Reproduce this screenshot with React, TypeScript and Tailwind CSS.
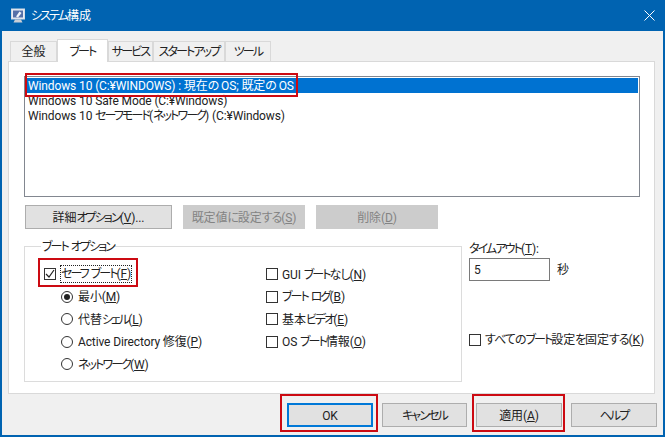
import { FC, ReactNode } from "react";

const tabs = ["全般", "ブート", "サービス", "スタートアップ", "ツール"];
const tabWidths = ["w-[47px]", "w-[51px]", "w-[45px]", "w-[72px]", "w-[46px]"];

// "&V" underlines the mnemonic; kana runs are set tighter, like the narrow UI font
const T: FC<{ s: string }> = ({ s }) => (
  <>
    {s.split(/(&.|[ァ-ヶー]+|[ぁ-ん]+)/).map((part, i) => {
      if (part.startsWith("&")) return <u key={i}>{part[1]}</u>;
      if (/^[ァ-ヶー]/.test(part)) return <span key={i} className="tracking-[-1.9px]">{part}</span>;
      if (/^[ぁ-ん]/.test(part)) return <span key={i} className="tracking-[-1px]">{part}</span>;
      return part;
    })}
  </>
);

const AppIcon = () => (
  <svg width="16" height="16" viewBox="0 0 16 16" className="shrink-0">
    <rect x="1.5" y="1" width="13" height="10" fill="#e8eef6" stroke="#d5dbe4" />
    <rect x="3" y="2.5" width="10" height="7" fill="#5670a8" />
    <path d="M6 8.5l3.5-5 2 1.5-3.5 4.5z" fill="#f2f5fa" />
    <path d="M5 11.5h6l1.5 3h-9z" fill="#c9ced6" />
  </svg>
);

const Check: FC<{ checked?: boolean }> = ({ checked }) => (
  <span className="flex h-[12px] w-[12px] shrink-0 items-center justify-center border border-[#333333] bg-white">
    {checked && (
      <svg width="10" height="10" viewBox="0 0 10 10">
        <path d="M1 5l3 3 5-7" fill="none" stroke="#222222" strokeWidth="1.2" />
      </svg>
    )}
  </span>
);

const Radio: FC<{ checked?: boolean }> = ({ checked }) => (
  <span className="flex h-[12px] w-[12px] shrink-0 items-center justify-center rounded-full border border-[#333333] bg-white">
    {checked && <span className="h-[6px] w-[6px] rounded-full bg-[#222222]" />}
  </span>
);

const Btn: FC<{ s: string; width: string; disabled?: boolean; focus?: boolean }> = ({ s, width, disabled, focus }) => (
  <div
    className={`flex h-[24px] items-center justify-center pt-[2px] ${width} ${
      focus
        ? "border-2 border-[#0078d7] bg-[#e1e1e1]"
        : disabled
          ? "border border-[#cccccc] bg-[#cccccc] text-[#838383]"
          : "border border-[#adadad] bg-[#e1e1e1]"
    }`}
  >
    <T s={s} />
  </div>
);

const CheckRow: FC<{ s: string }> = ({ s }) => (
  <div className="flex h-[22.5px] items-center gap-[4px]">
    <Check />
    <span className="pt-[2px]">
      <T s={s} />
    </span>
  </div>
);

const RadioRow: FC<{ s: string; checked?: boolean }> = ({ s, checked }) => (
  <div className="flex h-[22.5px] items-center gap-[5px] pl-[28px]">
    <Radio checked={checked} />
    <span className="pt-[2px]">
      <T s={s} />
    </span>
  </div>
);

const Red: FC<{ className: string }> = ({ className }) => (
  <div className={`pointer-events-none absolute border-2 border-[#cc0a12] ${className}`} />
);

export default function App(): ReactNode {
  return (
    <div
      className="relative flex h-[437px] w-[665px] flex-col overflow-hidden bg-[#0063b1] text-[12px] leading-[15px] tracking-[-0.12px] text-[#222222] [font-feature-settings:'palt']"
      style={{ fontFamily: 'Roboto, "Noto Sans CJK JP", sans-serif' }}
    >
      <div className="flex h-[31px] shrink-0 items-center gap-[5px] pl-[10px] pr-[10px] text-white">
        <AppIcon />
        <span className="pt-[2px]">
          <T s="システム構成" />
        </span>
        <svg width="11" height="11" viewBox="0 0 11 11" className="ml-auto">
          <path d="M0.5 0.5l10 10M10.5 0.5l-10 10" stroke="#ffffff" strokeWidth="1" />
        </svg>
      </div>

      <div className="mx-[2px] mb-[2px] flex flex-1 flex-col bg-[#f0f0f0] pl-[6px] pr-[8px]">
        <div className="flex h-[30px] shrink-0 items-end pl-[2px]">
          {tabs.map((t, i) => (
            <div
              key={t}
              className={`flex items-center justify-center whitespace-nowrap border border-b-0 border-[#d9d9d9] pt-[2px] ${tabWidths[i]} ${
                i === 1 ? "z-10 -mb-px h-[23px] bg-white" : "h-[20px] bg-[#f0f0f0]"
              }`}
            >
              <T s={t} />
            </div>
          ))}
        </div>

        <div className="h-[333px] shrink-0 border border-[#d9d9d9] bg-white pl-[15px] pt-[14px]">
          <div className="h-[121px] w-[616px] border border-[#828790] p-px leading-[17px]">
            <div className="h-[15px] bg-[#0072d1] pl-[2px] text-white">
              <T s="Windows 10 (C:¥WINDOWS) : 現在の OS; 既定の OS" />
            </div>
            <div className="h-[15px] pl-[2px]">Windows 10 Safe Mode (C:¥Windows)</div>
            <div className="h-[15px] pl-[2px]">
              <T s="Windows 10 セーフモード(ネットワーク) (C:¥Windows)" />
            </div>
          </div>

          <div className="ml-px mt-[8px] flex gap-[11px]">
            <Btn width="w-[147px]" s="詳細オプション(&V)..." />
            <Btn width="w-[122px]" disabled s="既定値に設定する(&S)" />
            <Btn width="w-[122px]" disabled s="削除(&D)" />
          </div>

          <div className="mt-[9px] flex">
            <fieldset className="h-[144px] w-[438px] shrink-0 border border-[#dcdcdc] pl-[8px]">
              <legend className="ml-[8px] px-px pt-[2px]">
                <T s="ブート オプション" />
              </legend>
              <div className="flex pt-[8px]">
                <div className="w-[233px]">
                  <div className="flex h-[22.5px] items-center gap-[4px] pl-[11px]">
                    <Check checked />
                    <span className="border border-dotted border-[#222222] pt-[1px]">
                      <T s="セーフ ブート(&F)" />
                    </span>
                  </div>
                  <RadioRow checked s="最小(&M)" />
                  <RadioRow s="代替シェル(&L)" />
                  <RadioRow s="Active Directory 修復(&P)" />
                  <RadioRow s="ネットワーク(&W)" />
                </div>
                <div>
                  <CheckRow s="GUI ブートなし(&N)" />
                  <CheckRow s="ブート ログ(&B)" />
                  <CheckRow s="基本ビデオ(&E)" />
                  <CheckRow s="OS ブート情報(&O)" />
                </div>
              </div>
            </fieldset>

            <div className="ml-[7px] flex flex-col pt-[3px]">
              <span className="pt-px">
                <T s="タイムアウト(&T):" />
              </span>
              <div className="mt-[1px] flex items-center gap-[7px]">
                <div className="flex h-[23px] w-[81px] items-center border border-[#7a7a7a] pl-[4px] pt-[2px]">5</div>
                <span className="pt-[2px]">秒</span>
              </div>
              <div className="mt-[50px] flex items-center gap-[4px] whitespace-nowrap">
                <Check />
                <span className="pt-[2px]">
                  <T s="すべてのブート設定を固定する(&K)" />
                </span>
              </div>
            </div>
          </div>
        </div>

        <div className="-mr-[2px] mt-[9px] flex justify-end gap-[9px]">
          <Btn width="w-[86px]" focus s="OK" />
          <Btn width="w-[85px]" s="キャンセル" />
          <Btn width="w-[86px]" s="適用(&A)" />
          <Btn width="w-[86px]" s="ヘルプ" />
        </div>
      </div>

      <Red className="left-[57px] top-[39px] h-[16px] w-[50px]" />
      <Red className="left-[25px] top-[73px] h-[24px] w-[273px]" />
      <Red className="left-[38px] top-[258px] h-[29px] w-[100px]" />
      <Red className="left-[280px] top-[394px] h-[38px] w-[98px]" />
      <Red className="left-[472px] top-[394px] h-[38px] w-[93px]" />
    </div>
  );
}
